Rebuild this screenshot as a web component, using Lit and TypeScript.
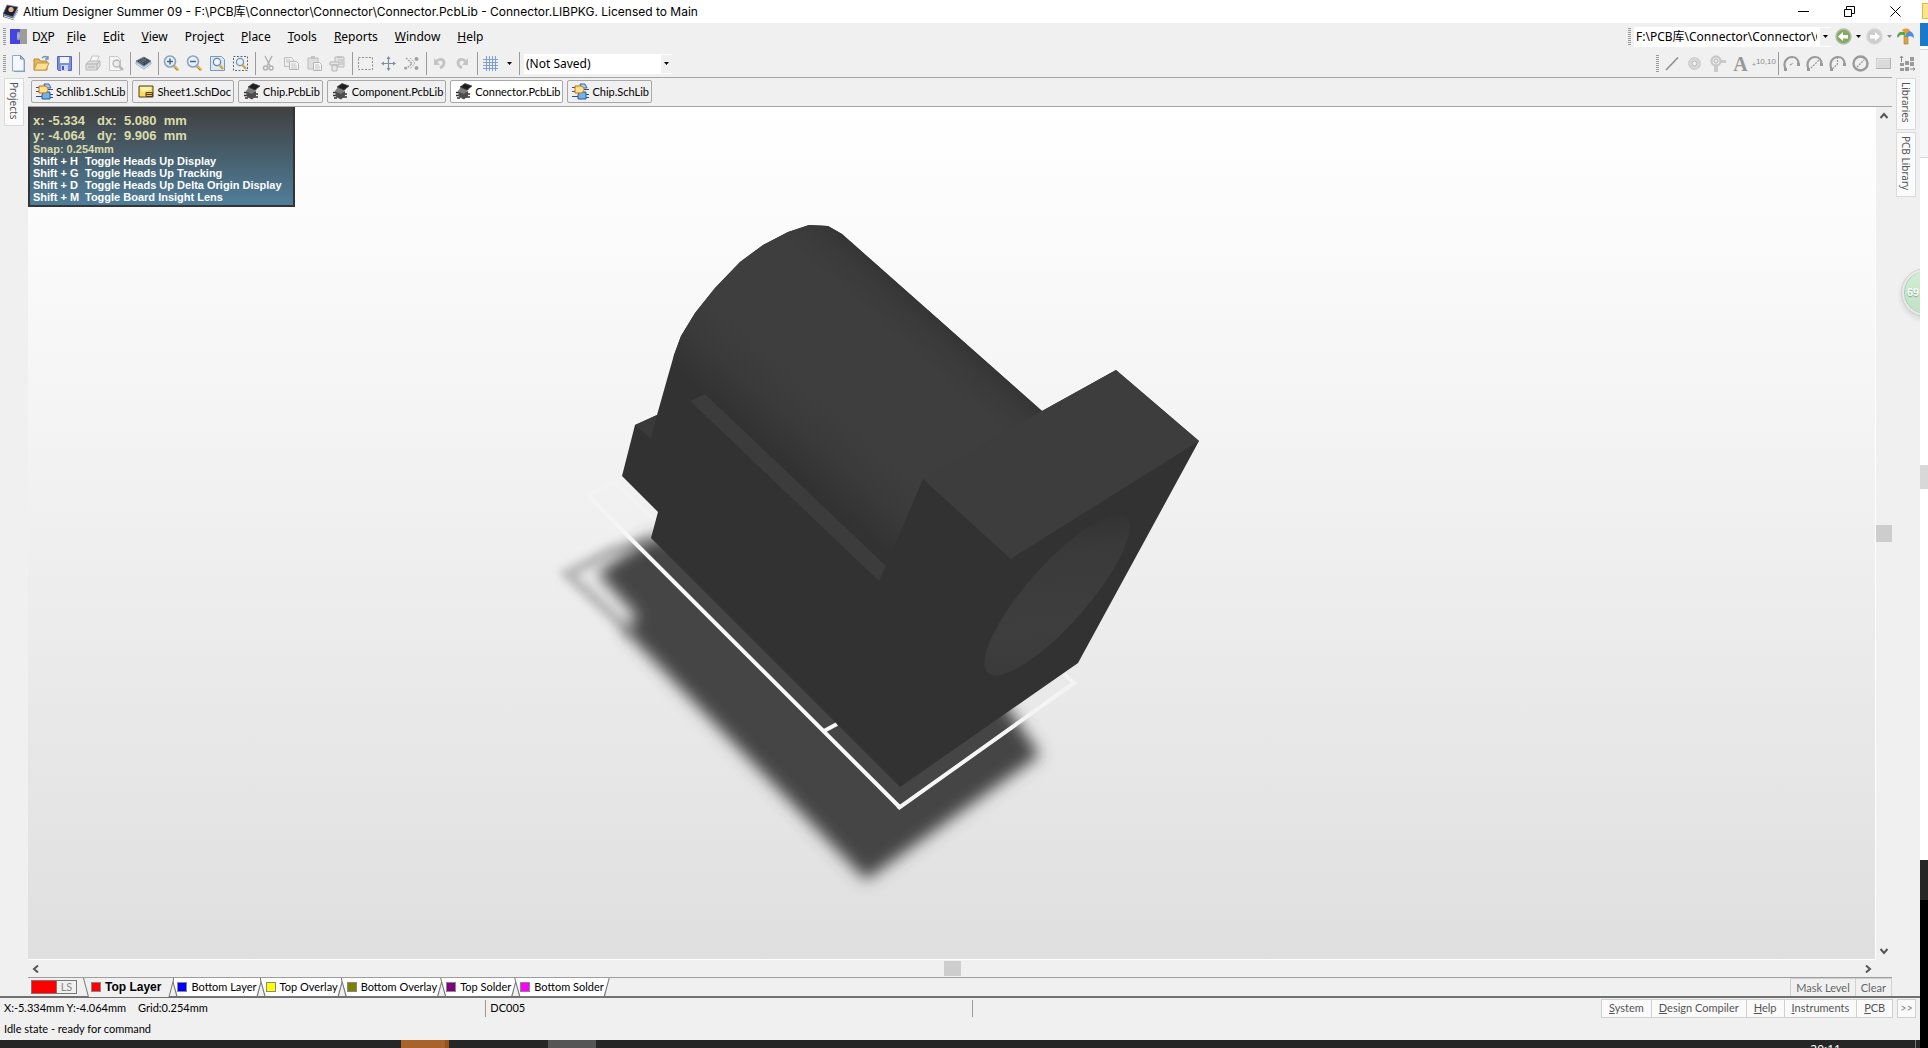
import { LitElement, html, svg, css, TemplateResult } from "lit";
import { customElement, property, state } from "lit/decorators.js";
import { classMap } from "lit/directives/class-map.js";

const chip = svg`
  <path d="M1 7v2l8 5 7-5V7l-7 5z" fill="#d5e6f4" stroke="#6f8ea9" stroke-width=".6"/>
  <path d="M1 6 9 11 16 6 9 2z" fill="#39424c" stroke="#6d8294" stroke-width=".8"/>
  <path d="m4 6 5 3M6 5l5 3M8 4l5 3M6 8l5-4M4 7l5-4" stroke="#71818f" stroke-width=".7"/>`;

const lens = (inner: unknown) => svg`
  <path d="m10.500 10.500 4 4" stroke="#d9b765" stroke-width="3" stroke-linecap="round"/>
  <path d="m11.500 12.500 2.500 2.500" stroke="#8c7136" stroke-width=".8"/>
  <circle cx="7" cy="6.500" r="5.500" fill="#e6f0fb" stroke="#8ba3bf" stroke-width="1.600"/>${inner}`;

const gauge = (needle: string) => svg`
  <path d="M2.500 14C-.5 7 4 2 9 2c4 0 6.500 3 6.500 7" fill="none" stroke="#9a9a9a" stroke-width="2.200"/>
  <path d="${needle}" stroke="#9a9a9a" stroke-width="1.300" stroke-dasharray="2 1" fill="none"/>
  <rect x="1" y="13" width="3" height="3" fill="#9a9a9a"/><rect x="14" y="8" width="3" height="3" fill="#9a9a9a"/>`;

const icons: Record<string, TemplateResult> = {
  app: svg`<path d="M1 11 11 14 16 6v3l-5 8-10-3z" fill="#5f6d80"/>
    <path d="M1 11 5 2l11 2-5 10z" fill="#1d2230" stroke="#75809a" stroke-width=".8"/>
    <circle cx="9" cy="6.500" r="2.600" fill="#e8b48c"/><path d="m2 13 9 3 5-8" stroke="#dfe4ec" fill="none"/>`,
  dxp: svg`<path d="M0 1h10v15H0z" fill="#4444de"/><path d="M10 1h7v15h-7v-4.500c-1 1.500-4 .5-3-1.500 1 .5 2.500 0 2.500-2S8 5.500 7 6c-.5-2 2-3 3-1.500z" fill="#9c9c9c"/>
    <path d="M7 6c4-1.500 4 5.500 0 4.500z" fill="#a9a9f4"/>`,
  file: svg`<path d="M3 1h8l4 4v12H4z" fill="#7e97b5"/><path d="M2.500.5h8l3.500 3.500v12H2.500z" fill="#f4f9ff" stroke="#8fa9c8"/>
    <path d="M10.500.5V4H14z" fill="#b9cfe6" stroke="#6e8cb0"/>`,
  open: svg`<path d="M1 4h5l1 2h7v9H1z" fill="#e5b95c" stroke="#b98a35"/>
    <path d="m1 15 3-7h12l-3 7z" fill="#fbdf96" stroke="#c29843"/>
    <path d="M9 3c2-2 4-2 6 0m0-2v3h-3" fill="none" stroke="#6c8fb8" stroke-width="1.300"/>`,
  save: svg`<path d="M1.500 1.500h14v14h-13l-1-1z" fill="#7d8fdd" stroke="#5563b8"/>
    <rect x="4" y="2" width="9" height="6" fill="#f2f5fd"/><rect x="5" y="10" width="7" height="6" fill="#cfd6f3"/>
    <rect x="6" y="11" width="2" height="4" fill="#4a59ad"/>`,
  print: svg`<path d="m6 7 2-6h7l-2 6z" fill="#f7f7f7" stroke="#c2c2c2"/>
    <path d="M2 9 5 6h11v5l-3 4H2z" fill="#dedede" stroke="#bababa"/>
    <path d="M2 9h11v6M13 9l3-3M4 12h7" fill="none" stroke="#b0b0b0"/>`,
  preview: svg`<path d="M2.500 1.500h8l3 3v11h-11z" fill="#f6f6f6" stroke="#c8c8c8"/>
    <circle cx="9.500" cy="8.500" r="3.500" fill="#ececec" stroke="#b5b5b5" stroke-width="1.300"/>
    <path d="m12 11 4 4" stroke="#bababa" stroke-width="2.500"/>`,
  layers: chip,
  zoomIn: lens(svg`<path d="M4 6.500h6M7 3.500v6" stroke="#46668f" stroke-width="1.500"/>`),
  zoomOut: lens(svg`<path d="M4 6.500h6" stroke="#46668f" stroke-width="1.500"/>`),
  zoomDoc: svg`<path d="M1.500 1.500h11l3 3v11h-14z" fill="#dbe8f6" stroke="#7d98b8"/>
    <circle cx="8" cy="7" r="3.600" fill="#f1f7fd" stroke="#6786a8" stroke-width="1.300"/>
    <path d="m10.500 10 3.500 4" stroke="#d1a94f" stroke-width="2.600"/>`,
  zoomArea: svg`<rect x="1.500" y="1.500" width="14" height="14" fill="none" stroke="#56677c" stroke-dasharray="2 1.500"/>
    <circle cx="8" cy="7" r="3.600" fill="#e2eefa" stroke="#7894b3" stroke-width="1.300"/>
    <path d="m10.500 10 3.500 4" stroke="#d1a94f" stroke-width="2.600"/>`,
  cut: svg`<path d="m5 1 5 10M12 1 7 11" stroke="#b2b2b2" stroke-width="1.500"/>
    <circle cx="5.500" cy="13" r="2" fill="none" stroke="#b2b2b2" stroke-width="1.500"/>
    <circle cx="11" cy="13" r="2" fill="none" stroke="#b2b2b2" stroke-width="1.500"/>`,
  copy: svg`<path d="M1.500 2.500h7l2 2v7h-9z" fill="#eee" stroke="#bfbfbf"/>
    <path d="M6.500 6.500h7l2 2v6h-9z" fill="#f5f5f5" stroke="#b5b5b5"/><path d="M3 5h4M3 7h3M8 9h5M8 11h6M8 13h6" stroke="#c4c4c4"/>`,
  paste: svg`<path d="M2 3h10v11H2z" fill="#dfdfdf" stroke="#bcbcbc"/><path d="M5 1h4v3H5z" fill="#c4c4c4"/>
    <path d="M7.500 7.500h6l2 2v6h-8z" fill="#f5f5f5" stroke="#b5b5b5"/><path d="M9 10h4M9 12h5M9 14h5" stroke="#c4c4c4"/>`,
  stamp: svg`<path d="M6 2h9v10H6z" fill="#e2e2e2" stroke="#bcbcbc"/><path d="M8 1h5v2H8z" fill="#c4c4c4"/>
    <path d="M1 7h9v3H1zM3 10h5v6H3z" fill="#e6e6e6" stroke="#b5b5b5"/><path d="M11 7h3M11 9h3M9 5h5" stroke="#bcbcbc"/>`,
  select: svg`<rect x="1.500" y="2.500" width="14" height="12" fill="none" stroke="#8a8a8a" stroke-dasharray="2 1.500"/>`,
  move: svg`<path d="M8.500 2v13M2 8.500h13" stroke="#7d8fa3" stroke-width="1.200"/>
    <path d="m8.500 1-2 3h4zM8.500 16l-2-3h4zM1 8.500l3-2v4zM16 8.500l-3-2v4z" fill="#7d8fa3"/>`,
  clear: svg`<path d="m3 3 6 5.500L3 14" fill="none" stroke="#9b9b9b" stroke-width="1.300" stroke-dasharray="2 1"/>
    <path d="m7 3 5 5-5 6" fill="none" stroke="#a6a6a6" stroke-dasharray="2 1"/>
    <circle cx="13.500" cy="4" r="2" fill="#a3a3a3"/><circle cx="13.500" cy="13" r="2" fill="#a3a3a3"/><circle cx="2.500" cy="13" r="1.500" fill="#a3a3a3"/>`,
  undo: svg`<path d="M5 7c3-4 8-3 8 1 0 3-2 4-4 5" fill="none" stroke="#c4c4c4" stroke-width="2.800"/><path d="M3 3v7h6z" fill="#c4c4c4"/>`,
  redo: svg`<path d="M12 7C9 3 4 4 4 8c0 3 2 4 4 5" fill="none" stroke="#c4c4c4" stroke-width="2.800"/><path d="M14 3v7H8z" fill="#c4c4c4"/>`,
  grid: svg`<path d="M4.500 1v15M7.500 1v15M10.500 1v15M13.500 1v15M1 4.500h15M1 7.500h15M1 10.500h15M1 13.500h15" stroke="#7f9fd4"/>`,
  line: svg`<path d="M3 15 15 2.500" stroke="#8f8f8f" stroke-width="1.600"/>`,
  pad: svg`<circle cx="8.500" cy="8.500" r="4.500" fill="none" stroke="#d6d6d6" stroke-width="3"/>
    <circle cx="8.500" cy="8.500" r="6" fill="none" stroke="#c2c2c2" stroke-width=".7"/><circle cx="8.500" cy="8.500" r="2.500" fill="none" stroke="#b5b5b5"/>`,
  via: svg`<path d="M7 5h10v3H7zM5 8h4v9H5z" fill="#c9c9c9"/><circle cx="7" cy="6" r="4.500" fill="#f3f3f3" stroke="#c8c8c8" stroke-width="2.300"/>
    <circle cx="7" cy="6" r="2" fill="none" stroke="#aaa"/>`,
  arc1: gauge("M7 10 10 8"),
  arc2: gauge("M5 13 13 5"),
  arc3: gauge("M8.500 2v7L4 13.500"),
  circle: svg`<circle cx="8.500" cy="8.500" r="7" fill="none" stroke="#9a9a9a" stroke-width="2.400"/><path d="m5 12 7-7" stroke="#9a9a9a" stroke-width="1.300" stroke-dasharray="2 1"/>`,
  rect: svg`<rect x="1.500" y="3.500" width="14" height="10" fill="#dadada" stroke="#b3b3b3"/><path d="M2 13V4h13" fill="none" stroke="#ededed"/>`,
  array: svg`<path d="M7 6h4v4H7zM12 2h4v4h-4zM12 7h4v4h-4zM2 8h4v3H2zM2 13h4v3H2zM7 12h4v4H7z" fill="#999"/>
    <path d="M3.500 7V1M2 3l1.500-2L5 3M12 14h5m-2-1.500 2 1.500-2 1.500" stroke="#8b8b8b" fill="none"/>`,
  schlib: svg`<path d="M0 4.500h4M0 8.500h4M0 13.500h6M12 6.500h5M13 11.500h4M13 14.500h4" stroke="#2c4f9c"/>
    <path d="M7 9h7v7H6v-4z" fill="#6fb3e8" stroke="#28569b"/><path d="M8 1h5l2 4H9z" fill="#a9cdf0" stroke="#3868ac"/>
    <path d="M3 3h6c4 1 4 6 0 7H3z" fill="#ffe28a" stroke="#c96b14"/>`,
  schdoc: svg`<path d="M2 3h14v11H2z" fill="#ffd85e" stroke="#4b4127"/><path d="M3 4h11v3L5 9z" fill="#fff0b0"/>
    <path d="M9 9.500h6.500v4H9zM9 11.500h6.500" fill="#f2bd32" stroke="#4b4127"/>`,
  pcblib: svg`<path d="M1 9.500h4M1 12.500h4M2 15h3M11 14h4M11 11h4" stroke="#333" stroke-width="1.300"/>
    <path d="m3 8 5 2 5-2v5l-4 3.500L4 14z" fill="#4d4d4d"/><path d="m3 8 3-4 8 2-5 5z" fill="#7c7c7c"/>
    <path d="m5 4 5-3.500L17 3l-5 4z" fill="#1e1e1e" stroke="#444" stroke-width=".7"/>`,
  back: svg`<circle cx="8.500" cy="8.500" r="7.500" fill="#85aa63" stroke="#b4bfaa" stroke-width="1.500"/><path d="M3 8.500 8 4v3h5v3.500H8V13z" fill="#fff"/>`,
  forward: svg`<circle cx="8.500" cy="8.500" r="7.500" fill="#cdcdcd" stroke="#d6d6d6" stroke-width="1.500"/><path d="M14 8.500 9 4v3H4v3.500h5V13z" fill="#fff"/>`,
  home: svg`<path d="M7 8h4v8H7z" fill="#dba53f" stroke="#a7741e" stroke-width=".6"/><path d="M0 8c1-4 4-5 8-4l1 5C6 6 3 6 1 10z" fill="#55a546"/>
    <path d="M9 3c5-1 8 2 8 7-2-2-5-2-8-1z" fill="#4f8fe0"/><path d="M5 2c2-2 6-2 8 0L9 6z" fill="#ee9b32"/>`,
};

@customElement("cad-icon")
export class CadIcon extends LitElement {
  @property() name = "";
  static styles = css`
    :host { display: inline-flex; flex: none; }
    svg { display: block; width: 17px; height: 17px; }
  `;
  render() {
    return html`<svg viewBox="0 0 17 17" fill="none" aria-hidden="true">${icons[this.name]}</svg>`;
  }
}

type Tool = [icon: string, label: string];

const menus = ["DXP:1", "File:0", "Edit:0", "View:0", "Project:5", "Place:0", "Tools:0", "Reports:0", "Window:0", "Help:0"];

const editTools: Tool[][] = [
  [["file", "New"], ["open", "Open"], ["save", "Save"]],
  [["print", "Print"], ["preview", "Print preview"]],
  [["layers", "Board layers"]],
  [["zoomIn", "Zoom in"], ["zoomOut", "Zoom out"], ["zoomDoc", "Fit document"], ["zoomArea", "Fit area"]],
  [["cut", "Cut"], ["copy", "Copy"], ["paste", "Paste"], ["stamp", "Rubber stamp"]],
  [["select", "Select area"], ["move", "Move selection"], ["clear", "Deselect"]],
  [["undo", "Undo"], ["redo", "Redo"]],
];

const arcTools: Tool[] = [["arc1", "Arc by centre"], ["arc2", "Arc by edge"], ["arc3", "Arc any angle"], ["circle", "Full circle"], ["rect", "Fill"], ["array", "Paste array"]];

const documents: Tool[] = [
  ["schlib", "Schlib1.SchLib"], ["schdoc", "Sheet1.SchDoc"], ["pcblib", "Chip.PcbLib"],
  ["pcblib", "Component.PcbLib"], ["pcblib", "Connector.PcbLib"], ["schlib", "Chip.SchLib"],
];

const layers = [
  ["Top Layer", "#ff0000"], ["Bottom Layer", "#0000ff"], ["Top Overlay", "#ffff00"],
  ["Bottom Overlay", "#808000"], ["Top Solder", "#800080"], ["Bottom Solder", "#ff00ff"],
];

const panels = ["System", "Design Compiler", "Help", "Instruments", "PCB"];

const readout = [["x: -5.334", "dx:", "5.080  mm"], ["y: -4.064", "dy:", "9.906  mm"]];

const shortcuts = [
  ["Shift + H", "Toggle Heads Up Display"], ["Shift + G", "Toggle Heads Up Tracking"],
  ["Shift + D", "Toggle Heads Up Delta Origin Display"], ["Shift + M", "Toggle Board Insight Lens"],
];

const caret = html`<svg class="caret" viewBox="0 0 5 3" aria-hidden="true"><path d="M0 0h5L2.500 3z" fill="currentColor"/></svg>`;

const mnemonic = (text: string, at = 0) => html`${text.slice(0, at)}<u>${text[at]}</u>${text.slice(at + 1)}`;

@customElement("app-root")
export class AppRoot extends LitElement {
  @state() private documentName = "Connector.PcbLib";
  @state() private layer = "Top Layer";

  static styles = css`
    :host {
      display: grid;
      grid-template: minmax(0, 1fr) 8px / minmax(0, 1fr) 8px;
      height: 100vh;
      overflow: hidden;
      background: #262626;
      color: #000;
      font: 11px/14px Lato, "Liberation Sans", sans-serif;
    }
    * { box-sizing: border-box; }
    button, select { font: inherit; color: inherit; border: 0; background: none; padding: 0; margin: 0; border-radius: 0; }
    button { white-space: nowrap; }
    .ui { font: 12px/16px "Noto Sans", "Noto Sans CJK SC", sans-serif; }
    .window { position: relative; display: flex; flex-direction: column; min-width: 0; background: #f0f0f0; overflow: hidden; }

    .title { display: flex; align-items: center; height: 23px; flex: none; background: #fff; padding: 0 2px; }
    .title h1 { font: 12px/16px Inter, "Noto Sans CJK SC", sans-serif; margin: 0 auto 0 4px; white-space: nowrap; }
    .win-btn { width: 46px; height: 23px; display: grid; place-items: center; }
    .win-btn svg { width: 11px; height: 11px; display: block; }

    .bar { display: flex; align-items: center; height: 27px; flex: none; padding: 0 2px 0 3px; }
    .bar.nav { padding-right: 5px; }
    .grip { width: 3px; height: 18px; flex: none; background: repeating-linear-gradient(#9b9b9b 0 1px, transparent 1px 2px); margin-right: 1px; }
    .menu { display: flex; gap: 17px; margin: 0 auto 0 5px; }
    .menu button:first-child { margin-right: -5px; }
    .dxp { margin-left: 3px; }
    .tool { width: 23px; height: 23px; display: grid; place-items: center; flex: none; }
    .drop { width: 14px; height: 20px; display: grid; place-items: center; flex: none; }
    .nav .tool { width: 20px; }
    .nav .drop { width: 11px; }
    .caret { width: 5px; height: 3px; display: block; }
    .dim { color: #8b8b8b; }
    .sep { width: 1px; height: 23px; background: #9a9a9a; margin: 0 1px 0 3px; flex: none; }
    .combo { display: grid; grid-template: 20px / minmax(0, 1fr) 12px; align-items: center; justify-items: center; background: #fff; flex: none; }
    .combo select { grid-area: 1 / 1 / 2 / 3; width: 100%; height: 20px; padding: 0 14px 0 2px; appearance: none; }
    .combo .caret-box { grid-area: 1 / 2; width: 11px; height: 18px; display: grid; place-items: center; background: #f0f0f0; pointer-events: none; }
    .query { width: 148px; margin-left: 3px; }
    .path { width: 197px; margin: 0 2px; }
    .spacer { flex: 1; }
    .letter { font: bold 20px/20px "Liberation Serif", serif; color: #989898; }
    .coord { font: 8px/10px "Liberation Sans", sans-serif; color: #8b8b8b; }

    .main { flex: 1; min-height: 0; display: grid; grid-template-columns: 28px minmax(0, 1fr) 28px; }
    .side { display: flex; flex-direction: column; align-items: center; gap: 2px; padding-top: 1px; }
    .side.left { padding-right: 1px; }
    .side button { writing-mode: vertical-rl; width: 20px; border: 1px solid #dadada; background: #fbfbfb; padding: 3px 0 6px; color: #555; font: 10px/16px "Noto Sans", sans-serif; }
    .center { display: flex; flex-direction: column; min-width: 0; border-top: 1px solid #a5a5a5; }
    .docs { display: flex; align-items: center; gap: 4px; height: 29px; padding: 0 3px 1px; flex: none; border-bottom: 1px solid #a5a5a5; }
    .doc { display: flex; align-items: center; gap: 3px; height: 23px; padding: 0 2px 0 4px; border: 1px solid #a8a8a8; border-radius: 2px; background: #f0f0f0; }
    .doc.on { background: #fff; }
    .view { flex: 1; min-height: 0; display: grid; grid-template: minmax(0, 1fr) 17px / minmax(0, 1fr) 16px; }
    .board { position: relative; overflow: hidden; border: solid #fff; border-width: 0 1px 1px 0; background: linear-gradient(#fff, #fafafa 18%, #dfdfdf); }
    .board > svg { display: block; width: 100%; height: 100%; }
    .hud { position: absolute; left: 0; top: 0; width: 267px; height: 100px; padding: 6px 3px 0; border: solid #343434; border-width: 0 2px 2px; background: linear-gradient(#404040, #4f7e9a); color: #fff; font: bold 11px/12px "Liberation Sans", sans-serif; white-space: pre; }
    .hud p { margin: 0; display: grid; grid-template-columns: 52px auto; }
    .hud .big { font-size: 13px; line-height: 15px; color: #dcdcaa; grid-template-columns: 64px 27px auto; }
    .hud .snap { color: #dcdcaa; grid-template-columns: auto; }
    .scroll { display: flex; align-items: center; justify-content: space-between; color: #555; }
    .scroll.v { flex-direction: column; padding: 5px 0; }
    .scroll.h { padding: 0 4px; }
    .scroll svg { width: 8px; height: 8px; display: block; fill: none; stroke: #555; stroke-width: 2; }
    .thumb { width: 16px; height: 17px; background: #cdcdcd; }
    .scroll.h .thumb { height: 15px; width: 17px; }

    .layers { display: flex; height: 20px; flex: none; border-top: 1px solid #9d9d9d; }
    .set { display: flex; width: 46px; height: 14px; margin: 2px 6px 0 3px; border: 1px solid #777; color: #888; line-height: 12px; }
    .set i { width: 25px; background: #f00; border-right: 1px solid #777; }
    .set span { flex: 1; text-align: center; }
    .layer { position: relative; display: flex; align-items: center; gap: 4px; height: 19px; padding: 0 6px 2px; margin-right: -3px; background: #777; clip-path: polygon(0 0, 100% 0, calc(100% - 5px) 100%, 5px 100%); z-index: 0; }
    .layer::before { content: ""; position: absolute; inset: 0 1px 1px; background: #fff; clip-path: polygon(0 0, 100% 0, calc(100% - 5px) 100%, 5px 100%); z-index: -1; }
    .layer.on { z-index: 1; padding: 0 13px 2px 8px; font: bold 12px/14px "Liberation Sans", sans-serif; }
    .layer.on::before { background: #f0f0f0; bottom: 0; }
    .swatch { width: 10px; height: 10px; border: 1px solid #888; }
    .flat { border: 1px solid #d0d0d0; color: #666; height: 19px; padding: 0 5px; }
    .flat + .flat { margin-left: -1px; }

    .status { flex: none; height: 44px; border-top: 2px solid #717171; display: grid; grid-template: 20px 22px / minmax(0, 485fr) minmax(0, 486fr) minmax(0, 629fr) auto; align-items: center; padding-right: 4px; }
    .cell { display: flex; gap: 12px; height: 17px; align-items: center; padding-left: 4px; }
    .cell + .cell { border-left: 1px solid #999; }
    .panels { display: flex; }
    .panels button { height: 19px; padding: 0 7px; border: 1px solid #d0d0d0; background: #fafafa; color: #555; }
    .panels button + button { margin-left: -1px; }
    .panels button + .more { margin-left: 4px; padding: 0 2px; color: #888; }
    .idle { grid-column: 1 / -1; margin: 0; padding-left: 4px; }

    .badge { position: absolute; left: 100%; top: 269px; width: 47px; height: 47px; margin-left: -18px; border-radius: 50%; border: 2px solid #e9e9e9; outline: 1px solid #d0d0d0; background: linear-gradient(#d3ecd3, #bfe2c4); box-shadow: inset 1px 0 0 #a9c9b4, 0 3px 6px #0002; color: #fff; font: bold 11px/43px "Liberation Sans", sans-serif; padding-left: 3px; text-shadow: 0 1px 1px #7da388; }

    .behind { display: flex; flex-direction: column; background: #fff; grid-row: 1 / 3; grid-column: 2; }
    .behind div { flex: none; }
    .b-tab { height: 16px; margin: 3px 0 4px 2px; background: #fde48d; border: 1px solid #e5b93c; border-right: 0; }
    .b-blue { height: 23px; background: #1979ca; }
    .b-pane { height: 109px; margin-top: 3px; background: #f5f6f8; border: solid #d3d7dc; border-width: 1px 0; }
    .b-gap { height: 307px; }
    .b-thumb { height: 24px; background: #d8d8d8; }
    .behind .b-rest { flex: 1; }
    .b-dark { height: 40px; background: #262626; }
    .b-black { height: 148px; background: #000; }

    .taskbar { display: flex; overflow: hidden; color: #fff; }
    .taskbar .app { height: 8px; width: 48px; background: #555; margin-right: 99px; }
    .taskbar .app.hot { background: #a9622a; border-right: 4px solid #97521d; margin-left: 401px; }
    .taskbar time { margin: 3px 74px 0 auto; font: 12px/14px "Noto Sans", sans-serif; }
    .taskbar .edge { width: 1px; height: 8px; background: #777; margin-right: 4px; }
  `;

  private tool([icon, label]: Tool) {
    return html`<button class="tool" aria-label=${label}><cad-icon name=${icon}></cad-icon></button>`;
  }

  private renderModel() {
    return html`<svg viewBox="28 107 1847 852" preserveAspectRatio="xMidYMid meet" role="img" aria-label="DC005 3D body">
      <defs>
        <linearGradient id="barrel" gradientUnits="userSpaceOnUse" x1="842" y1="234" x2="702" y2="392">
          <stop offset="0" stop-color="#353535"/><stop offset=".07" stop-color="#3a3a3a"/>
          <stop offset=".2" stop-color="#3e3e3e"/><stop offset=".65" stop-color="#3e3e3e"/>
          <stop offset=".82" stop-color="#3a3a3a"/><stop offset="1" stop-color="#323232"/>
        </linearGradient>
        <linearGradient id="bore" gradientUnits="userSpaceOnUse" x1="988" y1="673" x2="1128" y2="517">
          <stop offset="0" stop-color="#383838"/><stop offset=".35" stop-color="#3e3e3e"/>
          <stop offset=".7" stop-color="#3a3a3a"/><stop offset="1" stop-color="#2c2c2c"/>
        </linearGradient>
        <linearGradient id="silkLeft" gradientUnits="userSpaceOnUse" x1="588" y1="495" x2="640" y2="548">
          <stop offset="0" stop-color="#f3f3f3"/><stop offset=".6" stop-color="#f5f5f5"/><stop offset="1" stop-color="#f8f8f8"/>
        </linearGradient>
        <linearGradient id="silkRight" gradientUnits="userSpaceOnUse" x1="960" y1="765" x2="1074" y2="683">
          <stop offset="0" stop-color="#f6f6f6"/><stop offset="1" stop-color="#f3f3f3"/>
        </linearGradient>
        <filter id="soft" x="-10%" y="-10%" width="120%" height="120%"><feGaussianBlur stdDeviation="8"/></filter>
        <filter id="ring" x="-20%" y="-20%" width="140%" height="140%"><feGaussianBlur stdDeviation="5"/></filter>
      </defs>
      <path filter="url(#soft)" fill="#444" d="M597 573 650 537 700 540 985 685 1008 708 1040 755 866 880 622 628 638 618z"/>
      <path filter="url(#ring)" fill="none" stroke="#777" stroke-width="11" opacity=".45" d="M650 543 612 551 568 574 632 634"/>
      <path fill="none" stroke="#f3f3f3" stroke-width="3" d="M655 520 614 482 588 495"/>
      <path fill="none" stroke="url(#silkLeft)" stroke-width="4" d="M588 495 632 540 899.500 807"/>
      <path fill="none" stroke="#f8f8f8" stroke-width="4" d="M824 731 837 724"/>
      <path fill="none" stroke="url(#silkRight)" stroke-width="4" d="M898 806 899.500 807.500 1074 683 1064 674"/>
      <path fill="#323232" d="M809 225 828 226 842 234 1042 411 1116 370 1199 441 1144 542 1078 663 900 787 651 538 658 512 622 476 635 425 657 415 668 376 674 355 681 336 695 313 715 288 740 262 763 245 788 232z"/>
      <path fill="url(#barrel)" d="M809 225 828 226 842 234 1042 411 1060 440 923 479 886 566 705 394 672 366 674 355 681 336 695 313 715 288 740 262 763 245 788 232z"/>
      <path fill="#3c3c3c" d="M690 401 705 394 886 566 879 581z"/>
      <path fill="#3d3d3d" d="M923 479 1042 411 1116 370 1199 441 1010.500 559z"/>
      <path fill="#3a3a3a" d="M635 425 657 415 651 439z"/>
      <ellipse cx="1057" cy="595" rx="104" ry="30" transform="rotate(-48.500 1057 595)" fill="url(#bore)"/>
    </svg>`;
  }

  render() {
    return html`
      <div class="window">
        <header class="title">
          <cad-icon name="app"></cad-icon>
          <h1>Altium Designer Summer 09 - F:\\PCB库\\Connector\\Connector\\Connector.PcbLib - Connector.LIBPKG. Licensed to Main</h1>
          <button class="win-btn" aria-label="Minimize"><svg viewBox="0 0 11 11"><path d="M0 5.500h11" stroke="#000"/></svg></button>
          <button class="win-btn" aria-label="Restore"><svg viewBox="0 0 11 11"><path d="M.5 3.500h7v7h-7zM2.500 3.500v-3h8v7h-3" fill="none" stroke="#000"/></svg></button>
          <button class="win-btn" aria-label="Close"><svg viewBox="0 0 11 11"><path d="m.5.5 10 10m0-10-10 10" stroke="#000"/></svg></button>
        </header>

        <nav class="bar nav ui">
          <span class="grip"></span>
          <cad-icon class="dxp" name="dxp"></cad-icon>
          <div class="menu">
            ${menus.map((m) => { const [t, at] = m.split(":"); return html`<button>${mnemonic(t, +at)}</button>`; })}
          </div>
          <span class="grip"></span>
          <div class="combo path">
            <select aria-label="Document path"><option>F:\\PCB库\\Connector\\Connector\\Connector.PcbLib</option></select>
            <span class="caret-box">${caret}</span>
          </div>
          ${this.tool(["back", "Back"])}<button class="drop" aria-label="Back history">${caret}</button>
          ${this.tool(["forward", "Forward"])}<button class="drop dim" aria-label="Forward history">${caret}</button>
          ${this.tool(["home", "Home"])}
        </nav>

        <div class="bar ui">
          <span class="grip"></span>
          ${editTools.map((g) => html`${g.map((t) => this.tool(t))}<span class="sep"></span>`)}
          ${this.tool(["grid", "Grid"])}<button class="drop" aria-label="Grid options">${caret}</button>
          <span class="sep"></span>
          <div class="combo query">
            <select aria-label="Saved query"><option>(Not Saved)</option></select>
            <span class="caret-box">${caret}</span>
          </div>
          <span class="spacer"></span>
          <span class="grip"></span>
          ${this.tool(["line", "Line"])}${this.tool(["pad", "Pad"])}${this.tool(["via", "Via"])}
          <button class="tool letter" aria-label="String">A</button>
          <button class="tool coord" aria-label="Coordinate"><span><sub>+</sub>10,10</span></button>
          <span class="sep"></span>
          ${arcTools.map((t) => this.tool(t))}
        </div>

        <div class="main">
          <aside class="side left"><button>Projects</button></aside>
          <section class="center">
            <div class="docs">
              ${documents.map(([icon, name]) => html`
                <button class=${classMap({ doc: true, on: name === this.documentName })} @click=${() => (this.documentName = name)}>
                  <cad-icon name=${icon}></cad-icon>${name}
                </button>`)}
            </div>
            <div class="view">
              <div class="board">
                ${this.renderModel()}
                <div class="hud">${readout.map((r) => html`<p class="big">${r.map((t) => html`<span>${t}</span>`)}</p>`)}<p class="snap">Snap: 0.254mm</p>${shortcuts.map(([keys, action]) => html`<p><span>${keys}</span><span>${action}</span></p>`)}</div>
              </div>
              <div class="scroll v">
                <svg viewBox="0 0 8 8"><path d="m.5 6 3.500-4 3.500 4"/></svg>
                <span class="thumb"></span>
                <svg viewBox="0 0 8 8"><path d="m.5 2 3.500 4 3.500-4"/></svg>
              </div>
              <div class="scroll h">
                <svg viewBox="0 0 8 8"><path d="M6 .5 2 4l4 3.500"/></svg>
                <span class="thumb"></span>
                <svg viewBox="0 0 8 8"><path d="m2 .5 4 3.500-4 3.500"/></svg>
              </div>
            </div>
            <div class="layers">
              <button class="set" aria-label="Layer sets"><i></i><span>LS</span></button>
              ${layers.map(([name, color]) => html`
                <button class=${classMap({ layer: true, on: name === this.layer })} @click=${() => (this.layer = name)}>
                  <span class="swatch" style="background:${color}"></span>${name}
                </button>`)}
              <span class="spacer"></span>
              <button class="flat">Mask Level</button><button class="flat">Clear</button>
            </div>
          </section>
          <aside class="side"><button>Libraries</button><button>PCB Library</button></aside>
        </div>

        <footer class="status">
          <div class="cell"><span>X:-5.334mm Y:-4.064mm</span><span>Grid:0.254mm</span></div>
          <div class="cell">DC005</div>
          <div class="cell"></div>
          <div class="panels">
            ${panels.map((p) => html`<button>${mnemonic(p)}</button>`)}
            <button class="more" aria-label="More panels">&gt;&gt;</button>
          </div>
          <p class="idle">Idle state - ready for command</p>
        </footer>

        <div class="badge">69</div>
      </div>

      <div class="behind">
        <div class="b-tab"></div><div class="b-blue"></div><div class="b-pane"></div><div class="b-gap"></div>
        <div class="b-thumb"></div><div class="b-rest"></div><div class="b-dark"></div><div class="b-black"></div>
      </div>

      <div class="taskbar">
        <span class="app hot"></span><span class="app"></span>
        <time>20:11</time><span class="edge"></span>
      </div>
    `;
  }
}
